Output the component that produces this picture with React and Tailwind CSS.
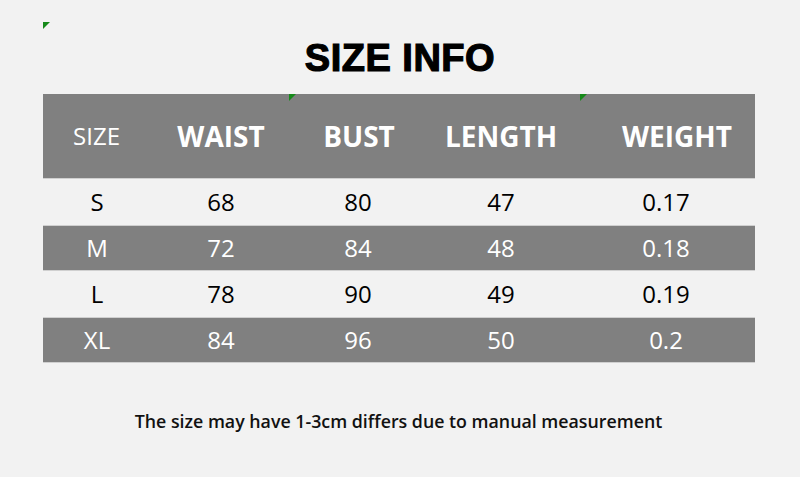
const rows = [
  { size: 'S', waist: '68', bust: '80', length: '47', weight: '0.17', dark: false },
  { size: 'M', waist: '72', bust: '84', length: '48', weight: '0.18', dark: true },
  { size: 'L', waist: '78', bust: '90', length: '49', weight: '0.19', dark: false },
  { size: 'XL', waist: '84', bust: '96', length: '50', weight: '0.2', dark: true },
]

const cols = 'grid grid-cols-[108px_140px_134px_152px_178px]'

function Marker({ className }) {
  return (
    <span
      className={`absolute w-[7px] h-[7px] bg-[#168a1a] [clip-path:polygon(0_0,100%_0,0_100%)] ${className}`}
    />
  )
}

export default function App() {
  return (
    <div className="relative w-[800px] h-[477px] bg-[#f2f2f2] flex flex-col items-center font-['Open_Sans',sans-serif] overflow-hidden">
      <Marker className="left-[43px] top-[22px]" />

      <h1 className="mt-[36px] text-[38px] leading-[44px] font-bold tracking-[0.5px] text-black font-['Liberation_Sans',Arial,sans-serif] [-webkit-text-stroke:1.2px_black]">
        SIZE INFO
      </h1>

      <div className="relative mt-[14px] w-[712px] self-start ml-[43px]">
        <Marker className="left-[246px] top-0" />
        <Marker className="left-[537px] top-0" />

        {/* header */}
        <div className={`${cols} h-[85px] bg-[#808080] text-white items-center border-b border-[#d0d0d0]`}>
          <div className="text-center text-[24px] pr-[1px]">SIZE</div>
          <div className="text-center text-[28px] font-bold">WAIST</div>
          <div className="text-center text-[28px] font-bold pl-[2px]">BUST</div>
          <div className="text-center text-[28px] font-bold">LENGTH</div>
          <div className="text-center text-[28px] font-bold pl-[22px]">WEIGHT</div>
        </div>

        {rows.map((r) => (
          <div
            key={r.size}
            className={`${cols} h-[46px] items-center text-[24px] ${
              r.dark ? 'bg-[#808080] text-white border-y border-[#d0d0d0]' : 'text-black'
            }`}
          >
            <div className="text-center">{r.size}</div>
            <div className="text-center">{r.waist}</div>
            <div className="text-center">{r.bust}</div>
            <div className="text-center">{r.length}</div>
            <div className="text-center">{r.weight}</div>
          </div>
        ))}
      </div>

      <p className="mt-[46px] text-[17.8px] leading-[24px] font-semibold text-[#111] pr-[3px]">
        The size may have 1-3cm differs due to manual measurement
      </p>
    </div>
  )
}
